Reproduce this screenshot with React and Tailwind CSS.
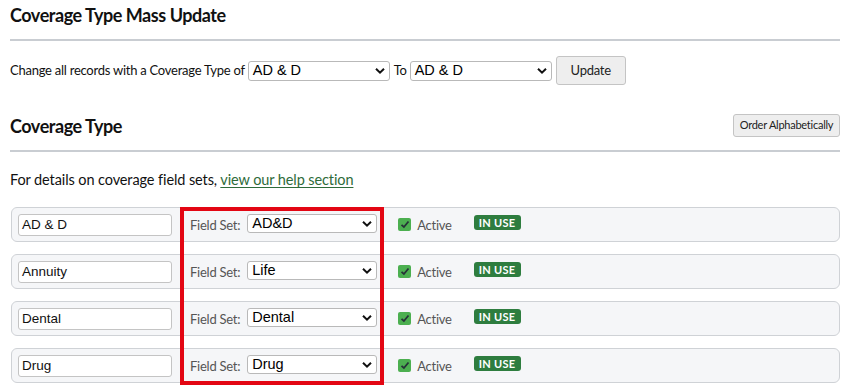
import React from "react";

const rows = [
  { name: "AD & D", fieldSet: "AD&D" },
  { name: "Annuity", fieldSet: "Life" },
  { name: "Dental", fieldSet: "Dental" },
  { name: "Drug", fieldSet: "Drug" },
];

function Chevron() {
  return (
    <svg width="10" height="7" viewBox="0 0 10 7" className="pointer-events-none absolute right-[5px] top-1/2 -translate-y-1/2">
      <path d="M1 1.2 L5 5.2 L9 1.2" fill="none" stroke="#111" strokeWidth="2" />
    </svg>
  );
}

function Select({ value, className }) {
  return (
    <div className={"relative " + className}>
      <div className="h-full w-full rounded-[3px] border border-[#b9b9b9] bg-white pl-[4px] text-[14.5px] leading-[17px] text-black tracking-normal [font-family:'Liberation_Sans',Arial,sans-serif]">
        {value}
      </div>
      <Chevron />
    </div>
  );
}

function Check() {
  return (
    <span className="flex h-[13px] w-[13px] items-center justify-center rounded-[2px] bg-[#4caf50]">
      <svg width="10" height="9" viewBox="0 0 10 9">
        <path d="M1.5 4.8 L3.9 7 L8.5 1.5" fill="none" stroke="#263238" strokeWidth="1.8" />
      </svg>
    </span>
  );
}

export default function App() {
  return (
    <div className="w-[855px] h-[390px] overflow-hidden bg-white px-[10px] text-[#111] tracking-[-0.25px] [font-family:Lato,'Noto_Sans',sans-serif]">
      <h1 className="pt-[4px] text-[18px] font-bold leading-[22px] tracking-[-0.45px]">Coverage Type Mass Update</h1>
      <div className="mt-[13px] mr-[5px] h-[2px] bg-[#c9cdd2]" />
      <div className="mt-[15px] flex items-center text-[13px]">
        <span>Change all records with a Coverage Type of</span>
        <Select value="AD & D" className="ml-[3px] h-[20px] w-[142px]" />
        <span className="ml-[4px]">To</span>
        <Select value="AD & D" className="ml-[3px] h-[20px] w-[142px]" />
        <button className="ml-[4px] h-[29px] w-[70px] rounded-[3px] border border-[#c4c4c4] bg-[#eeeeee] text-[13px] text-[#222]">
          Update
        </button>
      </div>
      <div className="mt-[29px] mr-[5px] flex items-center justify-between">
        <h2 className="text-[18px] font-bold leading-[22px] tracking-[-0.45px]">Coverage Type</h2>
        <button className="h-[23px] w-[107px] rounded-[3px] border border-[#c4c4c4] bg-[#eeeeee] text-[11px] text-[#222]">
          Order Alphabetically
        </button>
      </div>
      <div className="mt-[13px] mr-[5px] h-[2px] bg-[#c9cdd2]" />
      <p className="mt-[19px] text-[14.5px] leading-[18px] tracking-[-0.1px]">
        For details on coverage field sets,{" "}
        <a href="#" className="text-[#2e6b3a] underline underline-offset-2">view our help section</a>
      </p>
      <div className="relative mt-[18px] mr-[5px] ml-[1px] flex flex-col gap-[12px]">
        {rows.map((r) => (
          <div key={r.name} className="flex h-[35px] items-center rounded-[6px] border border-[#cfd2d6] bg-[#f5f6f8] pl-[6px]">
            <div className="h-[22px] w-[154px] rounded-[3px] border border-[#c4c4c4] bg-white pl-[3px] text-[13.5px] leading-[20px] tracking-normal [font-family:'Liberation_Sans',Arial,sans-serif]">
              {r.name}
            </div>
            <span className="ml-[18px] mt-[3px] text-[13px] text-[#555]">Field Set:</span>
            <Select value={r.fieldSet} className="ml-[7px] -mt-[2px] h-[19px] w-[130px]" />
            <span className="ml-[21px] -mt-[1px]"><Check /></span>
            <span className="ml-[6px] mt-[3px] text-[13px] text-[#555]">Active</span>
            <span className="ml-[22px] -mt-[4px] rounded-[3px] bg-[#2e7d3f] px-[5px] text-[11px] font-bold leading-[15px] tracking-[0.3px] text-white">
              IN USE
            </span>
          </div>
        ))}
        <div className="pointer-events-none absolute left-[169px] top-0 h-[178px] w-[204px] border-[4px] border-[#e30613]" />
      </div>
    </div>
  );
}
